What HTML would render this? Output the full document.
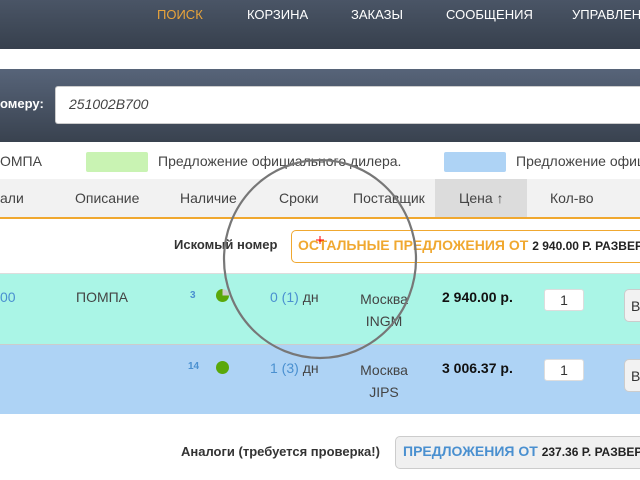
<!DOCTYPE html>
<html><head><meta charset="utf-8"><style>
*{margin:0;padding:0;box-sizing:border-box}
html,body{width:640px;height:480px;overflow:hidden}
body{background:#fff;font-family:"Liberation Sans",sans-serif;color:#333}
#w{position:relative;width:640px;height:480px;overflow:hidden}
.a{position:absolute;white-space:nowrap}
</style></head><body><div id="w">
<div class="a" style="left:0;top:0;width:640px;height:49px;background:linear-gradient(#4a5566,#37404d)"></div>
<div class="a" style="left:157px;top:7px;font-size:13px;color:#e8a33a">ПОИСК</div>
<div class="a" style="left:247px;top:7px;font-size:13px;color:#fff">КОРЗИНА</div>
<div class="a" style="left:351px;top:7px;font-size:13px;color:#fff">ЗАКАЗЫ</div>
<div class="a" style="left:446px;top:7px;font-size:13px;color:#fff">СООБЩЕНИЯ</div>
<div class="a" style="left:572px;top:7px;width:68px;overflow:hidden;font-size:13px;color:#fff">УПРАВЛЕНИЕ</div>
<div class="a" style="left:0;top:69px;width:640px;height:73px;background:linear-gradient(#576479,#39424f)"></div>
<div class="a" style="left:0;top:96px;font-size:13px;font-weight:bold;color:#fff">омеру:</div>
<div class="a" style="left:55px;top:86px;width:585px;height:38px;background:#fff;border-radius:3px 0 0 3px;border:1px solid #ccc;border-right:none"></div>
<div class="a" style="left:69px;top:96px;font-size:14px;font-style:italic;color:#444">251002B700</div>
<div class="a" style="left:0;top:153px;font-size:14px;color:#444">ОМПА</div>
<div class="a" style="left:86px;top:152px;width:62px;height:20px;background:#c9f3b3;border-radius:2px"></div>
<div class="a" style="left:158px;top:153px;font-size:14px;color:#444">Предложение официального дилера.</div>
<div class="a" style="left:444px;top:152px;width:62px;height:20px;background:#aed3f5;border-radius:2px"></div>
<div class="a" style="left:516px;top:153px;width:124px;overflow:hidden;font-size:14px;color:#444">Предложение официального</div>
<div class="a" style="left:0;top:179px;width:640px;height:38px;background:#f2f2f2"></div>
<div class="a" style="left:435px;top:179px;width:92px;height:38px;background:#dcdcdc"></div>
<div class="a" style="left:0;top:217px;width:640px;height:2px;background:#f0a830"></div>
<div class="a" style="left:0;top:190px;font-size:14px;color:#444">али</div>
<div class="a" style="left:75px;top:190px;font-size:14px;color:#444">Описание</div>
<div class="a" style="left:180px;top:190px;font-size:14px;color:#444">Наличие</div>
<div class="a" style="left:279px;top:190px;font-size:14px;color:#444">Сроки</div>
<div class="a" style="left:353px;top:190px;font-size:14px;color:#444">Поставщик</div>
<div class="a" style="left:459px;top:190px;font-size:14px;color:#444">Цена ↑</div>
<div class="a" style="left:550px;top:190px;font-size:14px;color:#444">Кол-во</div>
<div class="a" style="left:174px;top:237px;font-size:13px;font-weight:bold;color:#333">Искомый номер</div>
<div class="a" style="left:291px;top:230px;width:349px;height:33px;border:1px solid #f0a830;border-right:none;border-radius:5px 0 0 5px;background:#fff;overflow:hidden;font-size:14px;font-weight:bold;color:#f0a830;padding:6px 0 0 6px">ОСТАЛЬНЫЕ ПРЕДЛОЖЕНИЯ ОТ <span style="color:#222;font-size:12px">2 940.00 Р. РАЗВЕРНУТЬ</span></div>
<div class="a" style="left:0;top:273px;width:640px;height:71px;background:#aaf5e6;border-top:1px solid #ddd"></div>
<div class="a" style="left:0;top:344px;width:640px;height:70px;background:#aed3f5;border-top:1px solid #ccc"></div>
<div class="a" style="left:0;top:289px;font-size:14px;color:#4a90d0">00</div>
<div class="a" style="left:76px;top:289px;font-size:14px;color:#444">ПОМПА</div>
<div class="a" style="left:190px;top:290px;font-size:10px;font-weight:bold;color:#4a90d0">3</div>
<div class="a" style="left:216px;top:289px;width:13px;height:13px;border-radius:50%;background:conic-gradient(#ccc 0 25%,#5aa80a 25%)"></div>
<div class="a" style="left:270px;top:289px;font-size:14px;color:#4a90d0">0 (1) <span style="color:#444">дн</span></div>
<div class="a" style="left:358px;top:288px;width:52px;font-size:14px;color:#444;text-align:center;line-height:22px">Москва<br>INGM</div>
<div class="a" style="left:442px;top:289px;font-size:14px;font-weight:bold;color:#111">2 940.00 р.</div>
<div class="a" style="left:544px;top:289px;width:40px;height:22px;background:#fff;border:1px solid #ddd;border-radius:3px;font-size:14px;text-align:center;line-height:20px">1</div>
<div class="a" style="left:624px;top:289px;width:16px;height:33px;background:#f2f2f2;border:1px solid #ccc;border-right:none;border-radius:5px 0 0 5px;font-size:14px;padding:8px 0 0 6px;overflow:hidden">В</div>
<div class="a" style="left:188px;top:361px;font-size:10px;font-weight:bold;color:#4a90d0">14</div>
<div class="a" style="left:216px;top:361px;width:13px;height:13px;border-radius:50%;background:#5aa80a"></div>
<div class="a" style="left:270px;top:360px;font-size:14px;color:#4a90d0">1 (3) <span style="color:#444">дн</span></div>
<div class="a" style="left:358px;top:359px;width:52px;font-size:14px;color:#444;text-align:center;line-height:22px">Москва<br>JIPS</div>
<div class="a" style="left:442px;top:360px;font-size:14px;font-weight:bold;color:#111">3 006.37 р.</div>
<div class="a" style="left:544px;top:359px;width:40px;height:22px;background:#fff;border:1px solid #ddd;border-radius:3px;font-size:14px;text-align:center;line-height:20px">1</div>
<div class="a" style="left:624px;top:359px;width:16px;height:33px;background:#f2f2f2;border:1px solid #ccc;border-right:none;border-radius:5px 0 0 5px;font-size:14px;padding:8px 0 0 6px;overflow:hidden">В</div>
<div class="a" style="left:181px;top:444px;font-size:13px;font-weight:bold;color:#333">Аналоги (требуется проверка!)</div>
<div class="a" style="left:395px;top:436px;width:245px;height:33px;border:1px solid #ccc;border-right:none;border-radius:5px 0 0 5px;background:#f0f0f0;overflow:hidden;font-size:14px;font-weight:bold;color:#4a90d0;padding:6px 0 0 7px">ПРЕДЛОЖЕНИЯ ОТ <span style="color:#222;font-size:12px">237.36 Р. РАЗВЕРНУТЬ</span></div>
<svg class="a" style="left:0;top:0" width="640" height="480"><ellipse cx="320" cy="259" rx="96" ry="99" fill="none" stroke="#777" stroke-width="2.2"/><path d="M316 240h8M320 236v8" stroke="red" stroke-width="1"/></svg>
</div></body></html>
